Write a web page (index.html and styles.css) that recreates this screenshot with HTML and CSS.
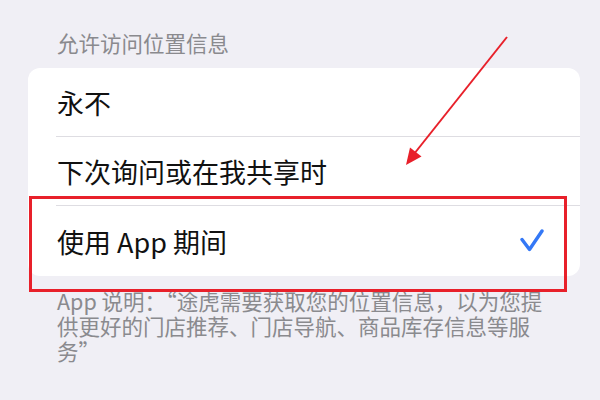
FILE: index.html
```html
<!DOCTYPE html>
<html lang="zh-CN">
<head>
	<meta charset="UTF-8">
	<title>位置</title>
	<link rel="stylesheet" href="styles.css">
</head>
<body>
	<div id="page">
		<div class="group-title">允许访问位置信息</div>
		<div class="card">
			<div class="row"><span>永不</span></div>
			<div class="row"><span>下次询问或在我共享时</span></div>
			<div class="row last">
				<span>使用 App 期间</span>
				<svg class="check" width="24" height="24" viewBox="0 0 24 24">
					<path d="M2 10.5 L9.5 20.5 L22 2" fill="none" stroke="#3478f6" stroke-width="3.4" stroke-linecap="round" stroke-linejoin="round"/>
				</svg>
			</div>
		</div>
		<div class="note">App 说明：“途虎需要获取您的位置信息，以为您提<br>供更好的门店推荐、门店导航、商品库存信息等服<br>务”</div>

		<!-- 标注 -->
		<div class="mark-box"></div>
		<svg class="mark-arrow" width="600" height="400" viewBox="0 0 600 400">
			<line x1="507" y1="37" x2="414" y2="154" stroke="#e8202a" stroke-width="2"/>
			<polygon points="406,165 421.5,156.5 410,147.5" fill="#e8202a"/>
		</svg>
	</div>
</body>
</html>
```
FILE: styles.css
```css
*{margin: 0;padding: 0;box-sizing: border-box;}
html, body {
	background: #f0eff5;
}
body {
	font-family: "Noto Sans CJK SC", "Noto Sans", sans-serif;
}
#page {
	position: relative;
	width: 600px;
	height: 400px;
	overflow: hidden;
	padding-top: 31px;
}
.group-title {
	padding-left: 57px;
	font-size: 21.5px;
	line-height: 24px;
	color: #8a8a8e;
	margin-bottom: 13px;
}
.card {
	margin: 0 20px 0 28px;
	background: #fff;
	border-radius: 12px;
	overflow: hidden;
}
.row {
	display: flex;
	align-items: center;
	justify-content: space-between;
	height: 69px;
	margin-left: 28px;
	padding: 0 36px 0 1px;
	border-bottom: 1px solid #dedde2;
	font-size: 27px;
	color: #111;
}
.row.last {
	height: 70px;
	border-bottom: none;
}
.check {
	display: block;
}
.note {
	margin-top: 12px;
	padding-left: 57px;
	font-size: 21.5px;
	line-height: 25px;
	color: #8a8a8e;
	white-space: nowrap;
}
.mark-box {
	position: absolute;
	left: 29px;
	top: 196px;
	width: 538px;
	height: 96px;
	border: 3px solid #e8202a;
}
.mark-arrow {
	position: absolute;
	left: 0;
	top: 0;
}
```
